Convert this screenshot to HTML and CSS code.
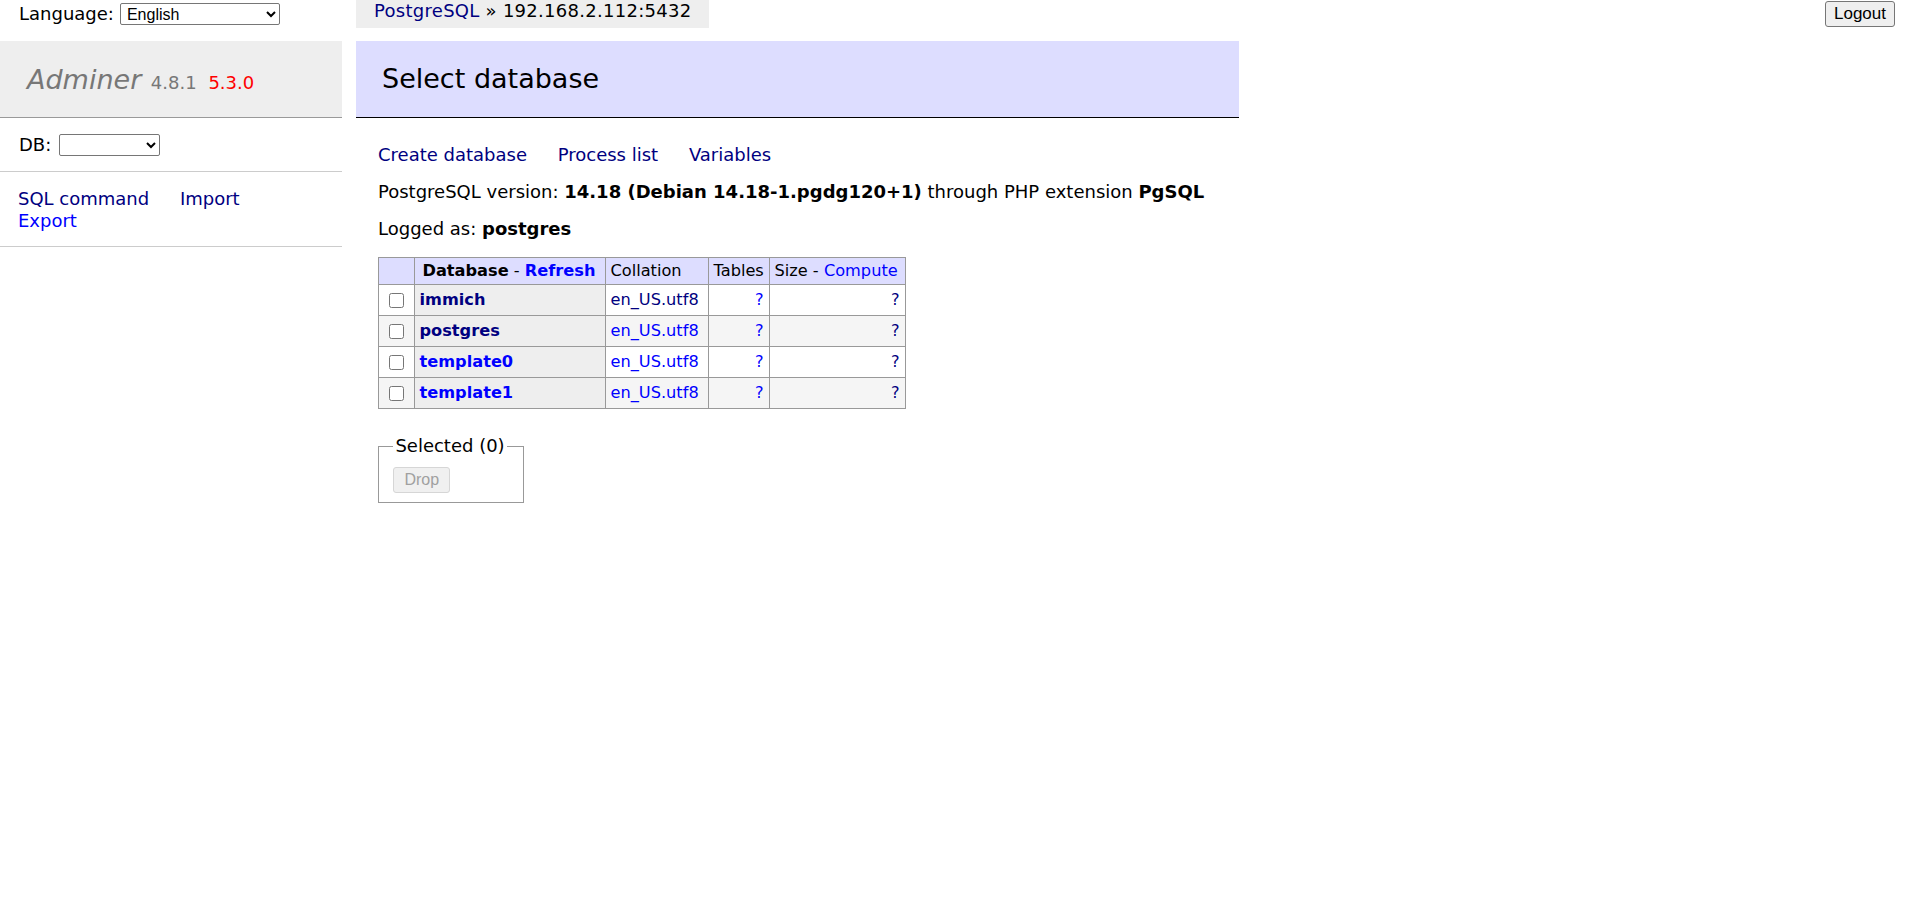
FILE: index.html
```html
<!DOCTYPE html>
<html lang="en">
<head>
  <meta charset="UTF-8">
  <title>Select database - Adminer</title>
  <link rel="stylesheet" href="styles.css">
</head>
<body>
  <div class="top">
    <div class="lang">
      <label for="lang">Language:</label>
      <select id="lang">
        <option>English</option>
      </select>
    </div>
    <div class="breadcrumb"><a href="#" class="v">PostgreSQL</a> &raquo; 192.168.2.112:5432</div>
    <button class="logout">Logout</button>
  </div>

  <div class="layout">
    <div class="menu">
      <h1><a href="#" class="brand">Adminer</a> <span class="version">4.8.1 <span class="new">5.3.0</span></span></h1>
      <p class="db">
        <label for="db">DB:</label>
        <select id="db"><option></option></select>
      </p>
      <p class="links">
        <a href="#" class="v">SQL command</a>
        <a href="#" class="v">Import</a>
        <a href="#">Export</a>
      </p>
    </div>

    <div class="content">
      <h2>Select database</h2>
      <p class="links">
        <a href="#" class="v">Create database</a>
        <a href="#" class="v">Process list</a>
        <a href="#" class="v">Variables</a>
      </p>
      <p>PostgreSQL version: <b>14.18 (Debian 14.18-1.pgdg120+1)</b> through PHP extension <b>PgSQL</b></p>
      <p>Logged as: <b>postgres</b></p>

      <table class="dbs">
        <colgroup>
          <col class="c-check">
          <col class="c-name">
          <col class="c-coll">
          <col class="c-tables">
          <col class="c-size">
        </colgroup>
        <thead>
          <tr>
            <td></td>
            <th class="name-head"><b>Database</b> - <a href="#"><b>Refresh</b></a></th>
            <td>Collation</td>
            <td>Tables</td>
            <td>Size - <a href="#">Compute</a></td>
          </tr>
        </thead>
        <tbody>
          <tr>
            <td class="check"><input type="checkbox"></td>
            <th><a href="#" class="v">immich</a></th>
            <td><a href="#" class="v">en_US.utf8</a></td>
            <td class="num"><a href="#">?</a></td>
            <td class="num"><a href="#" class="v">?</a></td>
          </tr>
          <tr>
            <td class="check"><input type="checkbox"></td>
            <th><a href="#" class="v">postgres</a></th>
            <td><a href="#">en_US.utf8</a></td>
            <td class="num"><a href="#">?</a></td>
            <td class="num"><a href="#" class="v">?</a></td>
          </tr>
          <tr>
            <td class="check"><input type="checkbox"></td>
            <th><a href="#">template0</a></th>
            <td><a href="#">en_US.utf8</a></td>
            <td class="num"><a href="#">?</a></td>
            <td class="num"><a href="#" class="v">?</a></td>
          </tr>
          <tr>
            <td class="check"><input type="checkbox"></td>
            <th><a href="#">template1</a></th>
            <td><a href="#">en_US.utf8</a></td>
            <td class="num"><a href="#">?</a></td>
            <td class="num"><a href="#" class="v">?</a></td>
          </tr>
        </tbody>
      </table>

      <fieldset class="selected">
        <legend>Selected (0)</legend>
        <button disabled>Drop</button>
      </fieldset>
    </div>
  </div>
</body>
</html>
```

FILE: styles.css
```css
body {
  margin: 0;
  color: #000;
  background: #fff;
  font: 18px/1.25 "DejaVu Sans", Verdana, sans-serif;
}
a {
  color: #00f;
  text-decoration: none;
}
a.v {
  color: #000080;
}
p {
  margin: 0;
}

/* top bar */
.top {
  display: flex;
  align-items: flex-start;
  height: 41px;
}
.lang {
  width: 356px;
  flex: none;
  display: flex;
  align-items: center;
  gap: 6px;
  height: 28px;
  padding-left: 19px;
  box-sizing: border-box;
}
.lang select {
  width: 160px;
  height: 22px;
  font: 16px "Liberation Sans", Arial, sans-serif;
  border: 1px solid #767676;
  border-radius: 2px;
  background: #fff;
  padding: 0 2px;
}
.breadcrumb {
  background: #eee;
  height: 28px;
  line-height: 22px;
  padding: 0 17px 0 18px;
  letter-spacing: 0.28px;
  white-space: nowrap;
}
.logout {
  margin: 1px 25px 0 auto;
  width: 70px;
  height: 26px;
  font: 17px "Liberation Sans", Arial, sans-serif;
  background: #efefef;
  border: 1px solid #767676;
  border-radius: 3px;
  padding: 0;
}

/* layout */
.layout {
  display: grid;
  grid-template-columns: 342px auto;
  column-gap: 36px;
  align-items: start;
}

/* menu */
.menu h1 {
  margin: 0;
  padding: 22px 27px 20px;
  height: 33.75px;
  font-size: 27px;
  font-weight: normal;
  line-height: 1.25;
  background: #eee;
  border-bottom: 1px solid #999;
  white-space: nowrap;
}
.brand {
  color: #777;
  font-style: italic;
}
.version {
  color: #777;
  font-size: 18px;
  margin-left: 1px;
}
.new {
  color: red;
  margin-left: 6px;
}
.menu p {
  padding: 15.5px 18px 13.5px;
  border-bottom: 1px solid #ccc;
}
.menu p.db {
  padding: 16px 19px 15px;
  display: flex;
  align-items: center;
  gap: 8px;
  height: 22.5px;
}
.menu p.db select {
  width: 101px;
  height: 22px;
  border: 1px solid #767676;
  border-radius: 2px;
  background: #fff;
}
.links a {
  margin-right: 25px;
  white-space: nowrap;
}

/* content */
.content {
  width: 861px;
}
.content h2 {
  margin: 0 0 0 -22px;
  padding: 21px 22px 21px 26px;
  font-size: 27px;
  font-weight: normal;
  line-height: 33.75px;
  background: #ddf;
  border-bottom: 1px solid #000;
}
.content p.links {
  margin-top: 26px;
}
.content p {
  margin-top: 14.5px;
}

table.dbs {
  margin-top: 16.7px;
  border-collapse: collapse;
  table-layout: fixed;
  width: 526.5px;
  font-size: 16.2px;
  line-height: 20px;
}
.c-check { width: 35.5px; }
.c-name { width: 191px; }
.c-coll { width: 103px; }
.c-tables { width: 61px; }
.c-size { width: 136px; }
.dbs th,
.dbs td {
  border: 1px solid #999;
  padding: 3px 5px;
  text-align: left;
  white-space: nowrap;
}
.dbs thead td,
.dbs thead th {
  background: #ddf;
  font-weight: normal;
}
.dbs thead th.name-head {
  padding-left: 8px;
}
.dbs tbody tr {
  height: 31px;
}
.dbs tbody tr:nth-child(2n) {
  background: #f5f5f5;
}
.dbs tbody th {
  background: #eee;
  font-weight: bold;
}
.dbs td.num {
  text-align: right;
}
.dbs td.check {
  text-align: center;
  padding: 0;
}
.dbs td.check input {
  width: 15px;
  height: 15px;
  margin: 0;
  vertical-align: middle;
}

fieldset.selected {
  display: inline-block;
  margin: 26px 0 0;
  padding: 10px 16px 9px 14.4px;
  border: 1px solid #999;
}
fieldset.selected legend {
  padding: 0 2px;
}
fieldset.selected button {
  height: 26px;
  padding: 0 10px;
  font: 16px "Liberation Sans", Arial, sans-serif;
  color: #a0a0a0;
  background: #f0f0f0;
  border: 1px solid #d6d6d6;
  border-radius: 3px;
}
```
